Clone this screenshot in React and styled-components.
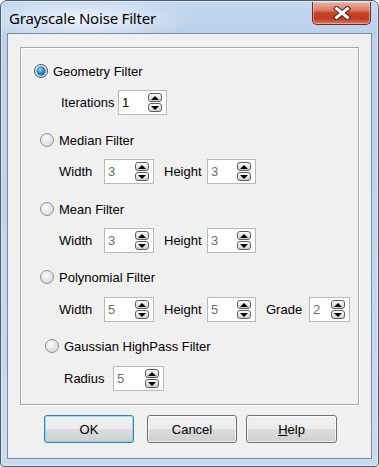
import styled, { createGlobalStyle } from "styled-components";

const GlobalStyle = createGlobalStyle`
  html, body {
    margin: 0;
    padding: 0;
    background: #ffffff;
  }
  * {
    box-sizing: border-box;
  }
`;

const Spin = ({ value, width, disabled }) => (
  <SpinBox $w={width}>
    <SpinValue $disabled={disabled}>{value}</SpinValue>
    <Spinner>
      <SpinArrow>
        <ArrowUp />
      </SpinArrow>
      <SpinArrow>
        <ArrowDown />
      </SpinArrow>
    </Spinner>
  </SpinBox>
);

const Field = ({ label, labelWidth, boxWidth, value, disabled }) => (
  <FieldWrap>
    <FieldLabel $w={labelWidth}>{label}</FieldLabel>
    <Spin value={value} width={boxWidth} disabled={disabled} />
  </FieldWrap>
);

const Radio = ({ checked, label, indent, mt }) => (
  <RadioRow $indent={indent} $mt={mt}>
    <RadioCircle $checked={checked}>{checked && <RadioDot />}</RadioCircle>
    <RadioLabel>{label}</RadioLabel>
  </RadioRow>
);

const App = () => {
  return (
    <>
      <GlobalStyle />
      <Window>
        <TitleBar>
          <Title>Grayscale Noise Filter</Title>
          <CloseButton>
            <svg width="18" height="14" viewBox="0 0 18 14">
              <path
                d="M3.5 2.5 L14.5 11.5 M14.5 2.5 L3.5 11.5"
                stroke="#4a2219"
                strokeWidth="5"
                strokeLinecap="square"
              />
              <path
                d="M3.5 2.5 L14.5 11.5 M14.5 2.5 L3.5 11.5"
                stroke="#ffffff"
                strokeWidth="3"
                strokeLinecap="square"
              />
            </svg>
          </CloseButton>
        </TitleBar>

        <Client>
          <GroupBox>
            <Radio checked label="Geometry Filter" indent={13} mt={13} />
            <ParamRow $indent={40} $mt={9}>
              <Field label="Iterations" labelWidth={57} boxWidth={49} value="1" />
            </ParamRow>

            <Radio label="Median Filter" indent={19} mt={15} />
            <ParamRow $indent={38} $mt={9}>
              <Field label="Width" labelWidth={45} boxWidth={50} value="3" disabled />
              <Field label="Height" labelWidth={43} boxWidth={49} value="3" disabled />
            </ParamRow>

            <Radio label="Mean Filter" indent={19} mt={15} />
            <ParamRow $indent={38} $mt={9}>
              <Field label="Width" labelWidth={45} boxWidth={50} value="3" disabled />
              <Field label="Height" labelWidth={43} boxWidth={49} value="3" disabled />
            </ParamRow>

            <Radio label="Polynomial Filter" indent={19} mt={14} />
            <ParamRow $indent={38} $mt={10}>
              <Field label="Width" labelWidth={45} boxWidth={50} value="5" disabled />
              <Field label="Height" labelWidth={43} boxWidth={49} value="5" disabled />
              <Field label="Grade" labelWidth={43} boxWidth={41} value="2" disabled />
            </ParamRow>

            <Radio label="Gaussian HighPass Filter" indent={24} mt={14} />
            <ParamRow $indent={43} $mt={10}>
              <Field label="Radius" labelWidth={49} boxWidth={51} value="5" disabled />
            </ParamRow>
          </GroupBox>

          <ButtonRow>
            <DialogButton $default>OK</DialogButton>
            <DialogButton>Cancel</DialogButton>
            <DialogButton $wide>
              <u>H</u>elp
            </DialogButton>
          </ButtonRow>
        </Client>
      </Window>
    </>
  );
};

export default App;

const Window = styled.div`
  width: 379px;
  height: 467px;
  display: flex;
  flex-direction: column;
  padding: 0 6px 7px 6px;
  border: 1px solid #4b5b6e;
  border-radius: 7px 7px 4px 4px;
  background: radial-gradient(
      ellipse 110px 22px at 80px 18px,
      rgba(240, 246, 252, 0.95),
      rgba(240, 246, 252, 0)
    ),
    linear-gradient(180deg, #c4d8ee 0%, #bcd2ea 30px, #c3d7ed 60%, #c8dbef 100%);
  box-shadow: inset 0 0 0 1px rgba(255, 255, 255, 0.45);
  font-family: "Liberation Sans", Arial, sans-serif;
`;

const TitleBar = styled.div`
  height: 32px;
  display: flex;
  align-items: flex-start;
  padding-left: 2px;
`;

const Title = styled.div`
  font-family: "Segoe UI", "Noto Sans", "Open Sans", sans-serif;
  font-size: 15px;
  color: #000;
  margin-top: 7px;
  letter-spacing: -0.2px;
`;

const CloseButton = styled.div`
  margin-left: auto;
  margin-right: 1px;
  width: 59px;
  height: 23px;
  margin-top: 1px;
  border: 1px solid #6a2a1e;
  border-top: none;
  border-radius: 0 0 5px 5px;
  background: linear-gradient(
    180deg,
    #eab0a1 0%,
    #dc826c 35%,
    #c7432a 50%,
    #c03a20 75%,
    #d9765e 100%
  );
  box-shadow: inset 0 0 0 1px rgba(255, 220, 210, 0.5);
  display: flex;
  align-items: center;
  justify-content: center;
`;

const Client = styled.div`
  flex: 1;
  display: flex;
  flex-direction: column;
  border: 1px solid #7b8ba0;
  background: #f0f0f0;
  padding: 13px 12px 15px 12px;
`;

const GroupBox = styled.div`
  height: 358px;
  border: 1px solid #a8a8a8;
  box-shadow: inset 1px 1px 0 #ffffff, 1px 1px 0 #ffffff;
  display: flex;
  flex-direction: column;
`;

const RadioRow = styled.div`
  height: 20px;
  display: flex;
  align-items: center;
  gap: 5px;
  margin-left: ${(p) => p.$indent}px;
  margin-top: ${(p) => p.$mt}px;
`;

const RadioCircle = styled.div`
  width: 14px;
  height: 14px;
  border-radius: 50%;
  border: 1px solid ${(p) => (p.$checked ? "#3b5a74" : "#8c8f93")};
  background: radial-gradient(circle at 40% 35%, #fbfbfb 0%, #e4e4e4 55%, #cfcfcf 100%);
  display: flex;
  align-items: center;
  justify-content: center;
`;

const RadioDot = styled.div`
  width: 8px;
  height: 8px;
  border-radius: 50%;
  background: radial-gradient(circle at 40% 35%, #8fdcff 0%, #2a8fd0 45%, #0c4e7f 100%);
  box-shadow: 0 0 0 0.5px #0b3a5e;
`;

const RadioLabel = styled.span`
  font-size: 13px;
  color: #000;
`;

const ParamRow = styled.div`
  height: 25px;
  display: flex;
  align-items: center;
  gap: 10px;
  margin-left: ${(p) => p.$indent}px;
  margin-top: ${(p) => p.$mt}px;
`;

const FieldWrap = styled.div`
  display: flex;
  align-items: center;
`;

const FieldLabel = styled.span`
  width: ${(p) => p.$w}px;
  font-size: 13px;
  color: #000;
`;

const SpinBox = styled.div`
  width: ${(p) => p.$w}px;
  height: 25px;
  border: 1px solid #b9b9b9;
  background: #ffffff;
  display: flex;
  align-items: center;
  padding: 0 4px 0 3px;
`;

const SpinValue = styled.span`
  flex: 1;
  font-size: 13px;
  color: ${(p) => (p.$disabled ? "#6d6d6d" : "#000")};
`;

const Spinner = styled.div`
  display: flex;
  flex-direction: column;
  gap: 1px;
`;

const SpinArrow = styled.div`
  width: 14px;
  height: 9px;
  border: 1px solid #5f5f5f;
  border-radius: 3px;
  background: linear-gradient(180deg, #fafafa 0%, #e6e6e6 50%, #cdcdcd 100%);
  display: flex;
  align-items: center;
  justify-content: center;
`;

const ArrowUp = styled.div`
  width: 0;
  height: 0;
  border-left: 4px solid transparent;
  border-right: 4px solid transparent;
  border-bottom: 4px solid #000;
`;

const ArrowDown = styled.div`
  width: 0;
  height: 0;
  border-left: 4px solid transparent;
  border-right: 4px solid transparent;
  border-top: 4px solid #000;
`;

const ButtonRow = styled.div`
  display: flex;
  margin-top: 10px;
  padding-left: 24px;
  gap: 9px;
`;

const DialogButton = styled.button`
  width: ${(p) => (p.$wide ? 91 : 90)}px;
  height: 28px;
  margin-right: ${(p) => (p.$default ? 4 : 0)}px;
  font-family: "Liberation Sans", Arial, sans-serif;
  font-size: 13px;
  color: #000;
  border-radius: 3px;
  border: 1px solid ${(p) => (p.$default ? "#3c7fb1" : "#707070")};
  background: linear-gradient(180deg, #f2f2f2 0%, #ebebeb 50%, #dddddd 51%, #cfcfcf 100%);
  box-shadow: inset 0 0 0 1px
    ${(p) => (p.$default ? "rgba(72, 216, 251, 0.55)" : "rgba(255, 255, 255, 0.7)")};
  padding: 0;

  u {
    text-decoration: underline;
  }
`;
